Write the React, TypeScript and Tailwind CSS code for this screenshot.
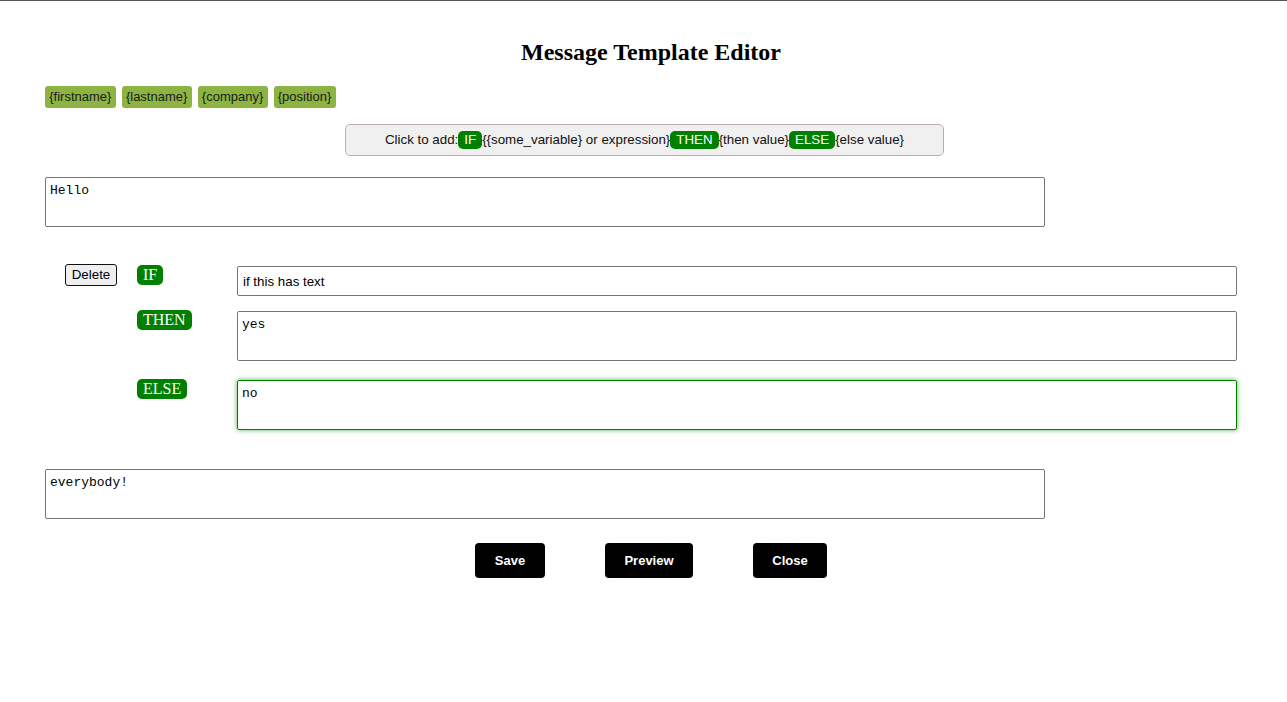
import React from "react";

const vars = ["{firstname}", "{lastname}", "{company}", "{position}"];

function HintChip({ label }: { label: string }) {
  return (
    <span className="inline-block rounded-[5px] bg-[#008000] px-[6px] leading-[18px] text-white">
      {label}
    </span>
  );
}

function CondChip({ label }: { label: string }) {
  return (
    <span className="block rounded-[5px] bg-[#008000] px-[6px] text-[16px] leading-[20px] text-white [font-family:'Liberation_Serif',serif]">
      {label}
    </span>
  );
}

const area =
  "block h-[50px] w-[1000px] resize-none rounded-[2px] px-[4px] pt-[5px] pb-[2px] text-[13px] leading-[15px] [font-family:'Liberation_Mono',monospace] outline-none";

export default function App() {
  return (
    <div className="min-h-screen border-t border-[#555] bg-white text-black [font-family:'Liberation_Sans',Arial,sans-serif]">
      <div className="pl-[45px] pr-[30px]">
        <h1 className="pt-[37px] text-center text-[24px] font-bold leading-[28px] [font-family:'Liberation_Serif',serif]">
          Message Template Editor
        </h1>

        {/* variable chips */}
        <div className="mt-[20px] flex gap-[6px]">
          {vars.map((v) => (
            <span
              key={v}
              className="rounded-[3px] bg-[#8db443] px-[4.25px] text-[13px] leading-[22px] text-[#1b1b1b]"
            >
              {v}
            </span>
          ))}
        </div>

        {/* conditional hint */}
        <div className="mt-[16px] flex justify-center pr-[13px]">
          <div className="flex h-[32px] w-[599px] items-center justify-center rounded-[5px] border border-[#bcadb1] bg-[#f0f0f0] text-[13.33px] text-[#111]">
            <span>Click to add:</span>
            <HintChip label="IF" />
            <span>{"{{some_variable} or expression}"}</span>
            <HintChip label="THEN" />
            <span>{"{then value}"}</span>
            <HintChip label="ELSE" />
            <span>{"{else value}"}</span>
          </div>
        </div>

        <textarea
          defaultValue="Hello"
          className={`mt-[21px] border border-[#767676] ${area}`}
        />

        {/* IF / THEN / ELSE block */}
        <div className="mt-[37px] flex">
          <div className="w-[92px] pl-[20px]">
            <button className="block h-[22px] w-[52px] rounded-[3px] border border-[#111] bg-[#efefef] text-[13.33px] leading-[20px]">
              Delete
            </button>
          </div>
          <div className="flex flex-col">
            <div className="flex">
              <div className="flex w-[100px] items-start pt-[1px]">
                <CondChip label="IF" />
              </div>
              <input
                defaultValue="if this has text"
                className="mt-[2px] mb-[14px] h-[30px] w-[1000px] rounded-[2px] border border-[#767676] px-[5px] text-[13.33px] outline-none"
              />
            </div>
            <div className="flex">
              <div className="flex w-[100px] items-start">
                <CondChip label="THEN" />
              </div>
              <textarea
                defaultValue="yes"
                className={`mt-[1px] mb-[18px] border border-[#767676] ${area}`}
              />
            </div>
            <div className="flex">
              <div className="flex w-[100px] items-start">
                <CondChip label="ELSE" />
              </div>
              <textarea
                defaultValue="no"
                className={`mt-[1px] border border-[#008000] shadow-[0_0_5px_#4caf50] ${area}`}
              />
            </div>
          </div>
        </div>

        <textarea
          defaultValue="everybody!"
          className={`mt-[39px] border border-[#767676] ${area}`}
        />

        {/* actions */}
        <div className="mt-[24px] flex justify-center gap-[60px]">
          <button className="h-[35px] w-[70px] rounded-[4px] bg-black text-[13px] font-semibold text-white">
            Save
          </button>
          <button className="h-[35px] w-[88px] rounded-[4px] bg-black text-[13px] font-semibold text-white">
            Preview
          </button>
          <button className="h-[35px] w-[74px] rounded-[4px] bg-black text-[13px] font-semibold text-white">
            Close
          </button>
        </div>
      </div>
    </div>
  );
}
